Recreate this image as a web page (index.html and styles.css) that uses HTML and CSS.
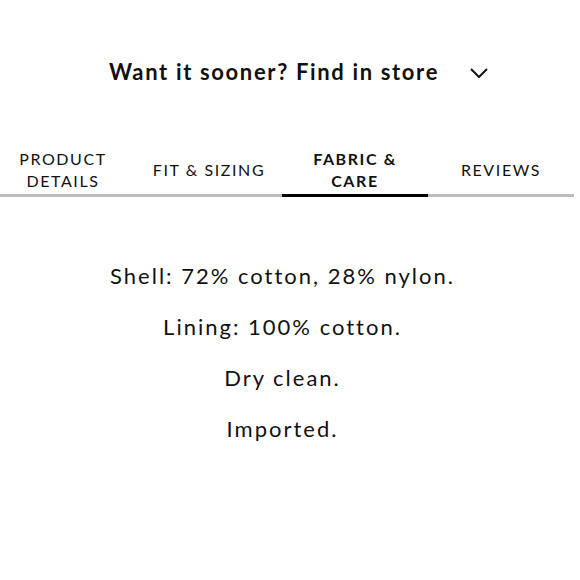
FILE: index.html
```html
<!DOCTYPE html>
<html lang="en">
<head>
<meta charset="utf-8">
<link rel="stylesheet" href="styles.css">
</head>
<body>
<div class="page">
  <div class="store">
    <span class="store-text">Want it sooner? Find in store</span>
    <svg class="chev" width="18" height="10" viewBox="0 0 18 10"><path d="M1 1 L9 9 L17 1" fill="none" stroke="#111" stroke-width="2"/></svg>
  </div>
  <div class="tabs-wrap">
    <div class="tabs">
      <div class="tab">PRODUCT<br>DETAILS</div>
      <div class="tab">FIT &amp; SIZING</div>
      <div class="tab active">FABRIC &amp;<br>CARE</div>
      <div class="tab">REVIEWS</div>
    </div>
  </div>
  <div class="content">
    <p>Shell: 72% cotton, 28% nylon.</p>
    <p>Lining: 100% cotton.</p>
    <p>Dry clean.</p>
    <p>Imported.</p>
  </div>
</div>
</body>
</html>
```
FILE: styles.css
```css
html, body { margin: 0; padding: 0; background: #fff; }
body { font-family: Lato, "Open Sans", sans-serif; color: #111; }
.page { width: 574px; }
.store {
  display: flex;
  align-items: center;
  justify-content: center;
  padding: 56px 0 0 23px;
  height: 30px;
  gap: 31px;
}
.store-text { font-size: 22px; font-weight: 700; letter-spacing: 1.65px; }
.chev { margin-top: 4px; }
.tabs-wrap { overflow: hidden; margin-top: 52px; }
.tabs {
  display: flex;
  margin-left: -10px;
  border-bottom: 3px solid #bdbdbb;
}
.tab {
  width: 146px;
  flex: none;
  height: 59px;
  padding-top: 8px;
  box-sizing: border-box;
  display: flex;
  align-items: center;
  justify-content: center;
  text-align: center;
  font-size: 16px;
  line-height: 22px;
  letter-spacing: 1.6px;
  margin-bottom: -3px;
  border-bottom: 3px solid transparent;
}
.tab.active { font-weight: 700; border-bottom-color: #000; }
.content { padding: 53px 9px 0 0; text-align: center; }
.content p { margin: 0; font-size: 22px; line-height: 51px; letter-spacing: 2px; }
```
